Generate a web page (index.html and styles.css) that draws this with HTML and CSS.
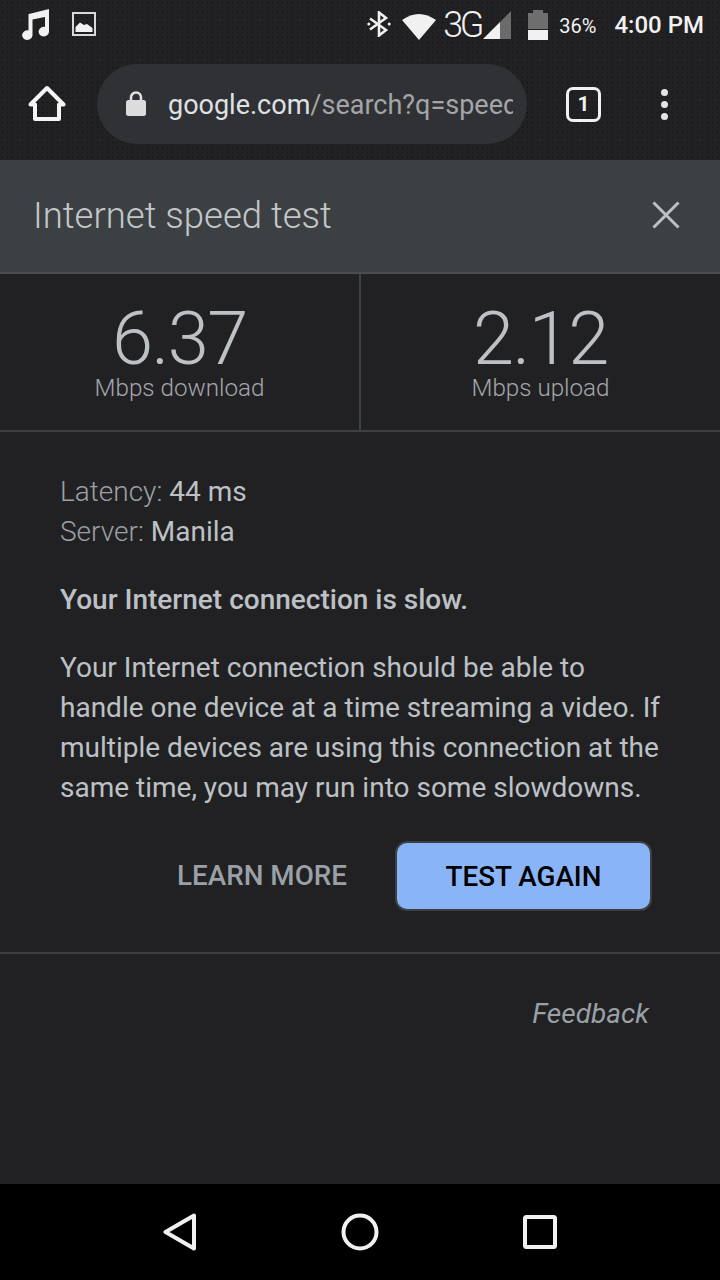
FILE: index.html
```html
<!DOCTYPE html>
<html lang="en">
<head>
    <meta charset="UTF-8">
    <meta name="viewport" content="width=device-width, initial-scale=1.0">
    <title>Internet speed test</title>
    <link rel="stylesheet" href="styles.css">
</head>
<body>

<div class="top">
    <div class="statusbar">
        <svg class="ic-music" width="28" height="32" viewBox="0 0 28 32"><path fill="#f1f1f1" d="M7 6 L27 1 V23.5 A5.2 4.8 0 1 1 23 19 V9 L10.5 11.5 V27 A5.2 4.8 0 1 1 6.5 22.5 V6 Z"/></svg>
        <svg class="ic-image" width="24" height="24" viewBox="0 0 24 24"><rect x="1" y="1" width="22" height="22" fill="none" stroke="#d8d8d8" stroke-width="2"/><path fill="#f1f1f1" d="M3.5 20 V15 L8 10.5 L12 13 L15 12 L20.5 16 V20 Z"/></svg>
        <span class="status-right">
            <svg width="24" height="26" viewBox="0 0 24 26"><path fill="none" stroke="#f1f1f1" stroke-width="2.6" d="M3 7.5 L19 19 L12 24.5 V1.5 L19 7 L3 18.5"/><circle cx="1.8" cy="13" r="1.5" fill="#f1f1f1"/><circle cx="22.2" cy="13" r="1.5" fill="#f1f1f1"/></svg>
            <svg class="ic-wifi" width="34" height="28" viewBox="0 0 34 28"><path fill="#f1f1f1" d="M0 8 Q17 -4 34 8 L17 28 Z"/></svg>
            <span class="net">3G</span>
            <svg class="ic-signal" width="28" height="28" viewBox="0 0 28 28"><path fill="#6b6b6b" d="M28 0 V28 H17 V11 Z"/><path fill="#f1f1f1" d="M0 28 L17 11 V28 Z"/></svg>
            <svg class="ic-battery" width="20" height="30" viewBox="0 0 20 30"><path fill="#6e6e6e" d="M0 3 H5 V0 H15 V3 H20 V19 H0 Z"/><rect y="20" width="20" height="10" fill="#f1f1f1"/></svg>
            <span class="pct">36%</span>
            <span class="clock">4:00 PM</span>
        </span>
    </div>
    <div class="toolbar">
        <svg class="ic-home" width="38" height="38" viewBox="0 0 38 38"><path fill="none" stroke="#f4f4f4" stroke-width="4" stroke-linejoin="round" d="M2.5 19.5 L19 3 L35.5 19.5 H31 V34 H7 V19.5 Z"/></svg>
        <div class="omnibox">
            <svg width="20" height="28" viewBox="0 0 20 28"><path fill="none" stroke="#e0e0e0" stroke-width="2.6" d="M5 11 V7.5 A5 5 0 0 1 15 7.5 V11"/><rect y="10" width="20" height="16" rx="2.5" fill="#dcdcdc"/></svg>
            <span class="url"><span class="url-host">google.com</span>/search?q=speed test</span>
        </div>
        <div class="tabs">1</div>
        <div class="menu"><i></i><i></i><i></i></div>
    </div>
</div>

<div class="panel-head">
    <span class="panel-title">Internet speed test</span>
    <svg width="28" height="28" viewBox="0 0 28 28"><path stroke="#bdc1c6" stroke-width="3" d="M1.5 1.5 L26.5 26.5 M26.5 1.5 L1.5 26.5"/></svg>
</div>

<div class="stats">
    <div class="stat">
        <div class="stat-num">6.37</div>
        <div class="stat-unit">Mbps download</div>
    </div>
    <div class="stat">
        <div class="stat-num">2.12</div>
        <div class="stat-unit">Mbps upload</div>
    </div>
</div>

<div class="details">
    <div class="meta"><span class="meta-label">Latency:</span> 44 ms</div>
    <div class="meta"><span class="meta-label">Server:</span> Manila</div>
    <p class="verdict">Your Internet connection is slow.</p>
    <p class="desc">Your Internet connection should be able to handle one device at a time streaming a video. If multiple devices are using this connection at the same time, you may run into some slowdowns.</p>
    <div class="actions">
        <a class="learn">LEARN MORE</a>
        <button class="again" type="button">TEST AGAIN</button>
    </div>
</div>

<div class="feedback-row">
    <span class="feedback">Feedback</span>
</div>

<div class="navbar">
    <svg width="34" height="38" viewBox="0 0 34 38"><path fill="none" stroke="#f1f1f1" stroke-width="4" stroke-linejoin="round" d="M2.5 19 L31 2.5 V35.5 Z"/></svg>
    <svg width="38" height="38" viewBox="0 0 38 38"><circle cx="19" cy="19" r="16.5" fill="none" stroke="#f1f1f1" stroke-width="4"/></svg>
    <svg width="34" height="34" viewBox="0 0 34 34"><rect x="2" y="2" width="30" height="30" rx="1.5" fill="none" stroke="#f1f1f1" stroke-width="4"/></svg>
</div>

</body>
</html>
```

FILE: styles.css
```css
* {
    box-sizing: border-box;
}

body {
    margin: 0;
    width: 720px;
    height: 1280px;
    overflow: hidden;
    display: flex;
    flex-direction: column;
    font-family: 'Roboto', sans-serif;
    background-color: #212123;
    color: #bdc1c6;
}

.top {
    height: 160px;
    background-color: #212123;
    background-image: radial-gradient(rgba(0, 0, 0, 0.55) 0.8px, transparent 1px);
    background-size: 5px 5px;
}

.statusbar {
    height: 52px;
    display: flex;
    align-items: flex-start;
    padding: 8px 16px 0 22px;
    color: #f1f1f1;
}

.ic-music {
    margin-right: 22px;
}

.ic-image {
    margin-top: 4px;
}

.status-right {
    margin-left: auto;
    display: flex;
    align-items: center;
    height: 32px;
}

.ic-wifi {
    margin-left: 11px;
    margin-top: 4px;
}

.net {
    margin-left: 7px;
    width: 35px;
    font-size: 36px;
    font-weight: 300;
    letter-spacing: -3.5px;
    line-height: 36px;
    margin-top: 2px;
}

.ic-signal {
    margin-left: 5px;
    margin-top: 2px;
}

.ic-battery {
    margin-left: 17px;
    margin-top: 2px;
}

.pct {
    margin-left: 11px;
    font-size: 20px;
    margin-top: 4px;
}

.clock {
    margin-left: 18px;
    font-size: 24px;
    font-weight: 500;
    margin-top: 2px;
}

.toolbar {
    height: 108px;
    display: flex;
    align-items: center;
    padding: 0 0 4px 28px;
}

.omnibox {
    width: 430px;
    height: 80px;
    margin-left: 31px;
    padding: 0 14px 0 29px;
    border-radius: 40px;
    background-color: #303134;
    display: flex;
    align-items: center;
    gap: 22px;
    overflow: hidden;
}

.omnibox svg {
    flex: none;
}

.url {
    font-size: 27px;
    padding-top: 2px;
    color: #a3a5a8;
    white-space: nowrap;
    overflow: hidden;
}

.url-host {
    color: #dfe1e4;
}

.tabs {
    width: 35px;
    height: 35px;
    margin-left: 39px;
    border: 3.5px solid #f1f1f1;
    border-radius: 7px;
    color: #f1f1f1;
    font-size: 21px;
    font-weight: 700;
    display: flex;
    align-items: center;
    justify-content: center;
}

.menu {
    margin-left: 60px;
    display: flex;
    flex-direction: column;
    gap: 5px;
}

.menu i {
    display: block;
    width: 7px;
    height: 7px;
    border-radius: 50%;
    background-color: #e4e4e4;
}

.panel-head {
    height: 114px;
    padding: 0 40px 2px 33px;
    background-color: #3c4043;
    border-bottom: 2px solid #4a4d50;
    display: flex;
    align-items: center;
    justify-content: space-between;
}

.panel-title {
    font-size: 36.5px;
    font-weight: 300;
    color: #c4c7ca;
}

.stats {
    height: 158px;
    display: flex;
    border-bottom: 2px solid #3c4043;
}

.stat {
    flex: 1;
    text-align: center;
    padding-top: 29px;
}

.stat:first-child {
    border-right: 2px solid #3c4043;
}

.stat-num {
    font-size: 74px;
    font-weight: 300;
    line-height: 71px;
    letter-spacing: -1.5px;
    color: #bdc1c6;
}

.stat-unit {
    font-size: 24.2px;
    font-weight: 300;
    line-height: 28px;
    color: #a4a7ab;
}

.details {
    height: 522px;
    padding: 40px 60px 0;
    border-bottom: 2px solid #3c4043;
    font-size: 28px;
    line-height: 40px;
}

.meta-label {
    font-weight: 300;
    color: #9aa0a6;
}

.verdict {
    margin: 28px 0 0;
    font-weight: 500;
}

.desc {
    margin: 28px 0 0;
    width: 602px;
}

.actions {
    margin: 33px 8px 0 0;
    display: flex;
    justify-content: flex-end;
    align-items: center;
    gap: 48px;
}

.learn {
    font-size: 27.8px;
    font-weight: 500;
    color: #9aa0a6;
}

.again {
    width: 257px;
    height: 70px;
    border: 2px solid #3c4043;
    border-radius: 12px;
    background-color: #8ab4f8;
    color: #000;
    font-family: inherit;
    font-size: 27.8px;
    font-weight: 500;
}

.feedback-row {
    padding: 40px 71px 0 0;
    text-align: right;
    flex: 1;
}

.feedback {
    font-size: 28px;
    line-height: 40px;
    font-style: italic;
    color: #9aa0a6;
}

.navbar {
    height: 96px;
    background-color: #000;
    display: flex;
    align-items: center;
    padding: 0 163px;
    justify-content: space-between;
}
```
